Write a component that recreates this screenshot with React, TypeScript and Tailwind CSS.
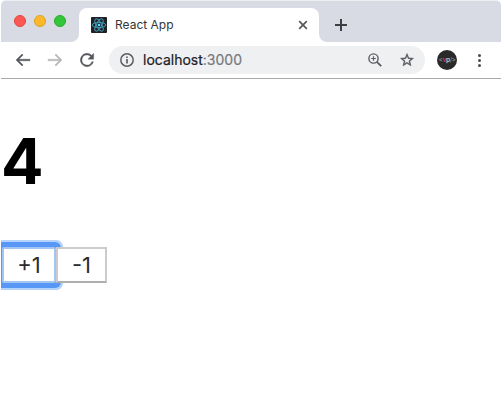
import React from "react";

function TabBar() {
  return (
    <div className="flex h-[42px] rounded-t-[5px] border-t border-[#eceef1] bg-[#d8dbe3]">
      <div className="flex w-[78px] gap-2 pl-[13px] pt-[14px]">
        <span className="size-3 rounded-full border border-[#e2463f] bg-[#fc5753]" />
        <span className="size-3 rounded-full border border-[#dfa023] bg-[#fdb72b]" />
        <span className="size-3 rounded-full border border-[#27ab2e] bg-[#33c63a]" />
      </div>
      <div className="relative mt-[7px] flex h-[34px] w-[240px] items-center rounded-t-lg bg-white pl-3 pr-[11px]">
        <svg className="absolute -left-2 bottom-0" width="8" height="8"><path d="M8 0v8H0A8 8 0 0 0 8 0Z" fill="#fff" /></svg>
        <svg className="absolute -right-2 bottom-0" width="8" height="8"><path d="M0 0v8h8A8 8 0 0 1 0 0Z" fill="#fff" /></svg>
        <svg width="16" height="16" viewBox="0 0 16 16" fill="none" stroke="#4199b3" strokeWidth="1">
          <rect width="16" height="16" rx="1" fill="#202124" stroke="none" />
          <ellipse cx="8" cy="8" rx="6.8" ry="2.6" />
          <ellipse cx="8" cy="8" rx="6.8" ry="2.6" transform="rotate(60 8 8)" />
          <ellipse cx="8" cy="8" rx="6.8" ry="2.6" transform="rotate(120 8 8)" />
          <circle cx="8" cy="8" r="1.3" fill="#61dafb" stroke="none" />
        </svg>
        <span className="ml-2 flex-1 whitespace-nowrap text-[12px] leading-4 text-[#333639]">React App</span>
        <svg width="10" height="10" stroke="#54575b" strokeWidth="1.7"><path d="m1.2 1.2 7.6 7.6m0-7.6L1.2 8.8" /></svg>
      </div>
      <svg className="ml-4 mt-[18px]" width="12" height="12" stroke="#3c4043" strokeWidth="2"><path d="M6 0v12M0 6h12" /></svg>
    </div>
  );
}

function Toolbar() {
  return (
    <div className="flex h-[37px] items-center border-b border-[#a9a9a9] bg-white pl-[13px]">
      <svg width="18" height="18" viewBox="0 0 24 24" fill="#54575c" stroke="#54575c" strokeWidth=".6"><path d="M21.3 11H6.5l5.6-5.6L10.7 4l-8 8 8 8 1.4-1.4L6.5 13h14.8z" /></svg>
      <svg className="ml-[14px]" width="18" height="18" viewBox="0 0 24 24" fill="#b6b7b9" stroke="#b6b7b9" strokeWidth=".6"><path d="M2.7 11h14.8l-5.6-5.6L13.3 4l8 8-8 8-1.4-1.4 5.6-5.6H2.7z" /></svg>
      <svg className="ml-[13px]" width="20" height="20" viewBox="0 0 24 24" fill="#54575c" stroke="#54575c" strokeWidth=".4"><path d="M17.65 6.35A8 8 0 1 0 19.73 14h-2.08A6 6 0 1 1 12 6c1.66 0 3.14.69 4.22 1.78L13 11h7V4z" /></svg>
      <div className="ml-[12px] flex h-7 w-[316px] items-center rounded-full bg-[#eff0f2] pl-[11px] pr-[10px]">
        <svg width="14" height="14" fill="none" stroke="#5b5e63" strokeWidth="1.5"><circle cx="7" cy="7" r="6.2" /><path d="M7 6v4.5M7 3.5V5" strokeWidth="1.7" /></svg>
        <span className="ml-[9px] flex-1 whitespace-nowrap text-[14px] leading-5 text-[#202124] [-webkit-text-stroke:0.2px_currentColor]">localhost<span className="text-[#77797e]">:3000</span></span>
        <svg className="mr-[17px]" width="14" height="14" fill="none" stroke="#5b5e63" strokeWidth="1.4"><circle cx="5.5" cy="5.5" r="4.6" /><path d="M5.5 3.2v4.6M3.2 5.5h4.6" strokeWidth="1.2" /><path d="m8.8 8.8 4.4 4.4" strokeWidth="1.9" /></svg>
        <svg width="16" height="16" viewBox="0 0 24 24" fill="#54575c" stroke="#54575c" strokeWidth=".5"><path d="m22 9.24-7.19-.62L12 2 9.19 8.63 2 9.24l5.46 4.73L5.82 21 12 17.27 18.18 21l-1.63-7.03zM12 15.4l-3.76 2.27 1-4.28-3.32-2.88 4.38-.38L12 6.1l1.71 4.04 4.38.38-3.32 2.88 1 4.28z" /></svg>
      </div>
      <div className="ml-3 flex size-5 items-center justify-center rounded-full bg-[#2a2a2a] text-[6.5px] leading-none tracking-[-0.4px] text-[#999]">
        <span>&lt;</span><span className="font-bold text-[#c72d5c]">v</span><span className="font-bold text-[#bbb]">p</span><span>/&gt;</span>
      </div>
      <div className="ml-[21px] flex flex-col gap-[2px]">
        <span className="size-[3px] rounded-full bg-[#484b50]" />
        <span className="size-[3px] rounded-full bg-[#484b50]" />
        <span className="size-[3px] rounded-full bg-[#484b50]" />
      </div>
    </div>
  );
}

export default function App() {
  return (
    <div className="h-[411px] w-[501px] overflow-hidden bg-white pl-px font-['Inter',sans-serif]">
      <TabBar />
      <Toolbar />
      <main className="overflow-hidden pb-4">
        <h1 className="mt-[42px] h-[80px] text-[63px] font-[660] leading-[80px] text-black">4</h1>
        <div className="mt-[46px] flex text-[22px] leading-8 text-[#2b2b2b]">
          <button className="ml-px h-9 w-[54px] rounded-[2px] border-2 border-[#a3c5f2] bg-white shadow-[0_0_0_5px_#5897f6,0_0_0_7px_#b5d3fd]">+1</button>
          <button className="relative h-9 w-[51px] border-2 border-[#cbcbcb] border-b-[#aeaeae] bg-white">-1</button>
        </div>
      </main>
    </div>
  );
}
